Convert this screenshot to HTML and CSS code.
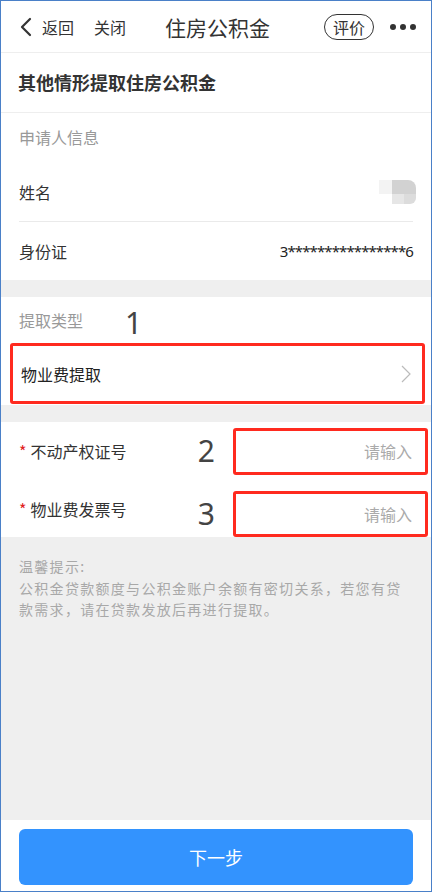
FILE: index.html
```html
<!DOCTYPE html>
<html lang="zh-CN">
<head>
  <meta charset="UTF-8" />
  <title>住房公积金</title>
  <meta name="viewport" content="width=device-width, initial-scale=1" />
  <link rel="stylesheet" href="styles.css">
</head>
<body>
  <div class="frame">
    <nav class="navbar">
      <div class="nav-left">
        <svg class="back" width="14" height="20" viewBox="0 0 14 20">
          <path d="M11 2 L3 10 L11 18" fill="none" stroke="#333" stroke-width="2.2" stroke-linecap="round" stroke-linejoin="round"/>
        </svg>
        <span class="nav-link">返回</span>
        <span class="nav-link close">关闭</span>
      </div>
      <div class="nav-title">住房公积金</div>
      <div class="nav-right">
        <span class="pill">评价</span>
        <span class="dots"><i></i><i></i><i></i></span>
      </div>
    </nav>

    <div class="page-title">其他情形提取住房公积金</div>

    <section class="block">
      <div class="block-title">申请人信息</div>
      <div class="row">
        <span class="label">姓名</span>
        <span class="mosaic"><i class="m1"></i><i class="m2"></i><i class="m3"></i><i class="m4"></i></span>
      </div>
      <div class="row">
        <span class="label">身份证</span>
        <span class="value">3****************6</span>
      </div>
    </section>

    <section class="block">
      <div class="block-title type-title">提取类型 <span class="mark mark-1">1</span></div>
      <div class="select-row">
        <span class="label strong">物业费提取</span>
        <svg width="10" height="18" viewBox="0 0 10 18">
          <path d="M1 1 L9 9 L1 17" fill="none" stroke="#bbb" stroke-width="1.2"/>
        </svg>
      </div>
    </section>

    <section class="block inputs">
      <div class="input-row">
        <span class="req">*</span><span class="label">不动产权证号</span>
        <span class="mark">2</span>
        <span class="input-box">请输入</span>
      </div>
      <div class="input-row second">
        <span class="req">*</span><span class="label">物业费发票号</span>
        <span class="mark">3</span>
        <span class="input-box">请输入</span>
      </div>
    </section>

    <div class="tips">
      温馨提示:<br>
      公积金贷款额度与公积金账户余额有密切关系，若您有贷款需求，请在贷款发放后再进行提取。
    </div>

    <footer class="footer">
      <a class="btn-next">下一步</a>
    </footer>
  </div>
</body>
</html>
```

FILE: styles.css
```css
body {
  margin: 0;
  font-family: "Noto Sans CJK SC", "Noto Sans", sans-serif;
  color: #333;
}
.frame {
  width: 430px;
  height: 890px;
  border: 1px solid #4a80c8;
  background: #efefef;
  display: flex;
  flex-direction: column;
  overflow: hidden;
}
.navbar {
  height: 51px;
  background: #fff;
  border-bottom: 1px solid #eee;
  display: flex;
  align-items: center;
  padding: 0 15px 0 18px;
}
.nav-left, .nav-right {
  flex: 1;
  display: flex;
  align-items: center;
}
.nav-right {
  justify-content: flex-end;
}
.back {
  margin-right: 9px;
}
.nav-link {
  font-size: 16px;
}
.close {
  margin-left: 20px;
}
.nav-title {
  font-size: 21px;
  color: #333;
}
.pill {
  font-size: 16px;
  line-height: 24px;
  padding: 0 8px;
  border: 1.5px solid #333;
  border-radius: 14px;
  margin-right: 16px;
}
.dots {
  display: flex;
  gap: 4px;
}
.dots i {
  width: 6px;
  height: 6px;
  border-radius: 50%;
  background: #333;
}
.page-title {
  height: 59px;
  line-height: 59px;
  background: #fff;
  border-bottom: 1px solid #eee;
  padding-left: 17px;
  font-size: 18px;
  font-weight: bold;
  color: #333;
}
.block {
  background: #fff;
  padding: 0 18px 0 18px;
  margin-bottom: 17px;
}
.block-title {
  height: 50px;
  line-height: 48px;
  font-size: 16px;
  color: #999;
}
.type-title {
  height: 46px;
  line-height: 46px;
  display: flex;
  align-items: center;
}
.row {
  height: 58px;
  display: flex;
  align-items: center;
  justify-content: space-between;
}
.row + .row {
  border-top: 1px solid #eaeaea;
}
.label {
  font-size: 16px;
  color: #333;
}
.strong {
  color: #222;
}
.value {
  font-size: 15px;
  letter-spacing: -0.9px;
  color: #222;
  font-family: "Noto Sans", sans-serif;
}
.mosaic {
  display: grid;
  grid-template-columns: 13px 12px 12px;
  grid-template-rows: 14px 10px;
  margin-right: -3px;
}
.mosaic .m1 { background: #f3f3f3; }
.mosaic .m2 { background: #d2d2d2; grid-column: 2 / 4; border-top-right-radius: 8px; }
.mosaic .m3 { background: #e6e6e6; grid-column: 2; }
.mosaic .m4 { background: #dcdcdc; grid-column: 3; border-bottom-right-radius: 6px; }
.mark {
  font-family: "Noto Sans", sans-serif;
  font-size: 30px;
  line-height: 1;
  color: #444;
}
.mark-1 {
  margin-left: 42px;
  margin-top: 6px;
}
.select-row {
  height: 55px;
  margin: 0 -12px 1px -9px;
  padding: 0 11px 0 8px;
  border: 3px solid #ff2a1f;
  border-radius: 3px;
  display: flex;
  align-items: center;
  justify-content: space-between;
}
.inputs {
  padding: 0 3px 0 18px;
  margin-bottom: 0;
}
.input-row {
  height: 58px;
  display: flex;
  align-items: center;
}
.input-row.second {
  height: 57px;
  align-items: flex-end;
}
.req {
  color: #e02020;
  font-size: 16px;
  margin-right: 4px;
  align-self: center;
}
.input-row .label {
  align-self: center;
}
.input-row .mark {
  margin-left: auto;
  margin-right: 18px;
}
.second .mark {
  margin-bottom: 8px;
}
.input-box {
  width: 176px;
  height: 41px;
  border: 3px solid #ff2a1f;
  border-radius: 3px;
  padding-right: 13px;
  text-align: right;
  line-height: 41px;
  font-size: 16px;
  color: #aaa;
}
.second .input-box {
  height: 40px;
  line-height: 40px;
}
.tips {
  flex: 1;
  padding: 19px 18px 0 18px;
  font-size: 14px;
  letter-spacing: 1.3px;
  line-height: 21.5px;
  color: #a8a8a8;
}
.footer {
  background: #fff;
  padding: 9px 18px 6px 18px;
}
.btn-next {
  display: block;
  height: 56px;
  line-height: 56px;
  background: #3393fe;
  border-radius: 6px;
  color: #fff;
  text-align: center;
  font-size: 18px;
  cursor: pointer;
}
```
